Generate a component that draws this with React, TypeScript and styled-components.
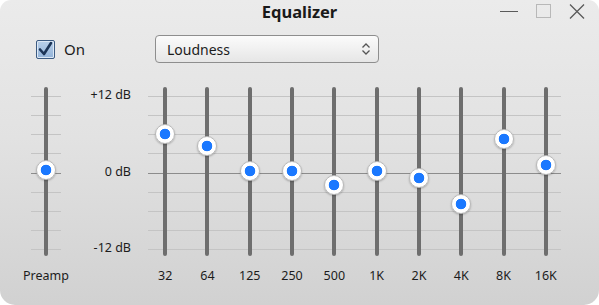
import styled, { createGlobalStyle } from "styled-components";

const GlobalStyle = createGlobalStyle`
  body {
    margin: 0;
    background: #ffffff;
    font-family: "Noto Sans", "Liberation Sans", sans-serif;
  }
`;

const bands = [
  { label: "32", gain: 5.8 },
  { label: "64", gain: 3.8 },
  { label: "125", gain: 0 },
  { label: "250", gain: 0 },
  { label: "500", gain: -2.2 },
  { label: "1K", gain: 0 },
  { label: "2K", gain: -1.1 },
  { label: "4K", gain: -5.2 },
  { label: "8K", gain: 4.9 },
  { label: "16K", gain: 0.8 },
];

const preampGain = 0.1;
const PX_PER_DB = 6.375;
const ZERO_Y = 83.5;
const LINES = 9;

const knobTop = (gain: number) => ZERO_Y - gain * PX_PER_DB;

function GridLines() {
  return (
    <Lines>
      {Array.from({ length: LINES }).map((_, i) => (
        <Line key={i} $zero={i === 4} />
      ))}
    </Lines>
  );
}

function Slider(props: { gain: number; column?: number }) {
  return (
    <Track style={props.column ? { gridColumn: props.column } : undefined}>
      <Knob style={{ top: knobTop(props.gain) }} />
    </Track>
  );
}

export default function App() {
  return (
    <Window>
      <GlobalStyle />
      <TitleBar>
        <span />
        <Title>Equalizer</Title>
        <Controls>
          <Minimize />
          <Maximize />
          <svg width="16" height="15" viewBox="0 0 16 15">
            <path
              d="M1 0.5 L15 14.5 M15 0.5 L1 14.5"
              stroke="#5a5a5a"
              strokeWidth="1.3"
              fill="none"
            />
          </svg>
        </Controls>
      </TitleBar>

      <Toolbar>
        <CheckLabel>
          <CheckBox>
            <svg width="17" height="17" viewBox="0 0 17 17">
              <path
                d="M3 8.5 L7 13 L14 2"
                stroke="#1d3557"
                strokeWidth="2.6"
                fill="none"
                strokeLinecap="round"
                strokeLinejoin="round"
              />
            </svg>
          </CheckBox>
          On
        </CheckLabel>
        <Select>
          Loudness
          <svg width="10" height="14" viewBox="0 0 10 14">
            <path
              d="M1.5 5.5 L5 2 L8.5 5.5 M1.5 8.5 L5 12 L8.5 8.5"
              stroke="#555"
              strokeWidth="1.3"
              fill="none"
            />
          </svg>
        </Select>
      </Toolbar>

      <EqArea>
        <PreampColumn>
          <PreampScale>
            <GridLines />
            <Slider gain={preampGain} />
          </PreampScale>
          <BandLabel>Preamp</BandLabel>
        </PreampColumn>

        <DbColumn>
          <span>+12 dB</span>
          <span>0 dB</span>
          <span>-12 dB</span>
        </DbColumn>

        <Bands>
          <BandLines>
            <GridLines />
          </BandLines>
          {bands.map((band, i) => (
            <Slider key={band.label} gain={band.gain} column={i + 1} />
          ))}
          {bands.map((band) => (
            <BandLabel key={band.label}>{band.label}</BandLabel>
          ))}
        </Bands>
      </EqArea>
    </Window>
  );
}

const Window = styled.div`
  width: 599px;
  height: 305px;
  box-sizing: border-box;
  border-radius: 11px 11px 15px 15px;
  background: linear-gradient(#ebebeb 0%, #e2e2e2 45%, #d1d1d1 100%);
  display: flex;
  flex-direction: column;
  overflow: hidden;
  color: #1c1c1c;
`;

const TitleBar = styled.div`
  height: 24px;
  display: grid;
  grid-template-columns: 1fr auto 1fr;
  align-items: center;
`;

const Title = styled.div`
  font-weight: 700;
  font-size: 16.5px;
  color: #1a1a1a;
  margin-top: -1px;
`;

const Controls = styled.div`
  display: flex;
  justify-content: flex-end;
  align-items: center;
  gap: 18px;
  padding-right: 14px;
  margin-top: -2px;
`;

const Minimize = styled.div`
  width: 18px;
  height: 1px;
  background: #5a5a5a;
`;

const Maximize = styled.div`
  width: 13px;
  height: 12px;
  border: 1px solid #b8b8b8;
`;

const Toolbar = styled.div`
  display: flex;
  align-items: center;
  margin-top: 11px;
  height: 28px;
  padding-left: 36px;
`;

const CheckLabel = styled.div`
  display: flex;
  align-items: center;
  gap: 9px;
  width: 119px;
  font-size: 15px;
  color: #1c1c1c;
`;

const CheckBox = styled.div`
  width: 17px;
  height: 17px;
  border: 1px solid #3c5b82;
  border-radius: 2px;
  background: linear-gradient(#b9d0ea, #93b3d8);
  display: flex;
  align-items: center;
  justify-content: center;
  box-shadow: inset 0 0 0 1px #dce8f5;
`;

const Select = styled.div`
  width: 224px;
  height: 28px;
  box-sizing: border-box;
  border: 1px solid #8e8e8e;
  border-radius: 4px;
  background: linear-gradient(#fbfbfb, #e6e6e6);
  display: flex;
  align-items: center;
  justify-content: space-between;
  padding: 0 7px 0 11px;
  font-size: 14px;
  color: #1c1c1c;
`;

const EqArea = styled.div`
  display: flex;
  margin-top: 24px;
`;

const PreampColumn = styled.div`
  width: 50px;
  margin-left: 21px;
  display: flex;
  flex-direction: column;
  align-items: center;
`;

const PreampScale = styled.div`
  display: grid;
  width: 30px;
  height: 169px;
  & > * {
    grid-area: 1 / 1;
  }
`;

const Lines = styled.div`
  height: 169px;
  box-sizing: border-box;
  padding: 9px 0 6px;
  display: flex;
  flex-direction: column;
  justify-content: space-between;
`;

const Line = styled.div<{ $zero: boolean }>`
  height: 1px;
  background: ${(p) => (p.$zero ? "#8c8c8c" : "#c4c4c4")};
`;

const Track = styled.div`
  position: relative;
  justify-self: center;
  width: 4px;
  height: 169px;
  border-radius: 2px;
  background: #6e6e6e;
  grid-row: 1;
`;

const Knob = styled.div`
  position: absolute;
  left: 50%;
  width: 20px;
  height: 20px;
  box-sizing: border-box;
  border-radius: 50%;
  transform: translate(-50%, -50%);
  background: radial-gradient(circle, #1a78ff 0 5px, #ffffff 5.6px);
  border: 1px solid #b9b9b9;
  box-shadow: 0 1px 2px rgba(0, 0, 0, 0.25);
`;

const DbColumn = styled.div`
  width: 60px;
  height: 169px;
  box-sizing: border-box;
  padding: 1px 0;
  display: flex;
  flex-direction: column;
  justify-content: space-between;
  align-items: flex-end;
  font-size: 12.5px;
  line-height: 14px;
  color: #1c1c1c;
`;

const Bands = styled.div`
  margin-left: 13px;
  width: 423px;
  display: grid;
  grid-template-columns: repeat(10, 1fr);
  grid-template-rows: 169px auto;
`;

const BandLines = styled.div`
  grid-area: 1 / 1 / 2 / -1;
  margin: 0 6px 0 4px;
`;

const BandLabel = styled.div`
  margin-top: 13px;
  font-size: 12.5px;
  line-height: 14px;
  text-align: center;
  color: #1c1c1c;
  white-space: nowrap;
`;
